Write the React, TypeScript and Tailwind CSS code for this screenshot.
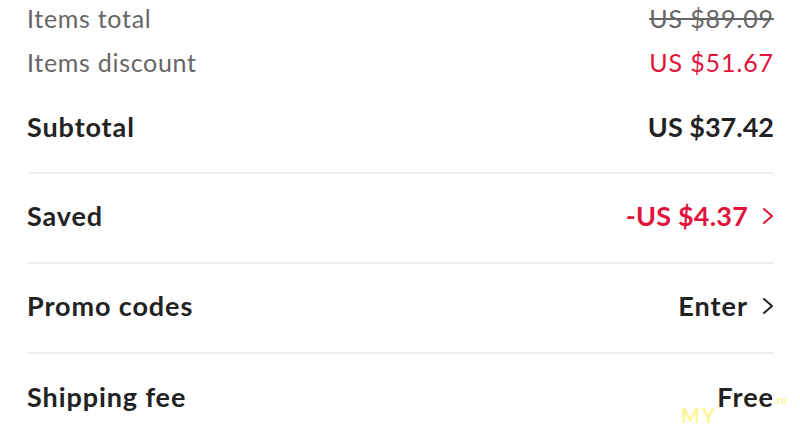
import React from "react";

function Chevron({ color }: { color: string }) {
  return (
    <svg width="12" height="18" viewBox="0 0 12 18" fill="none" className="shrink-0">
      <path d="M2 2 L10 9 L2 16" stroke={color} strokeWidth="2" strokeLinecap="round" strokeLinejoin="round" />
    </svg>
  );
}

export default function App() {
  return (
    <div
      className="relative w-[800px] h-[430px] overflow-hidden bg-white pl-[27px] pr-[26px]"
      style={{ fontFamily: "Lato, 'Noto Sans', sans-serif" }}
    >
      <div className="flex h-[38px] items-center justify-between text-[25px] text-[#666666]">
        <span className="tracking-[0.7px]">Items total</span>
        <span className="line-through tracking-[0.9px]">US $89.09</span>
      </div>
      <div className="flex h-[50px] items-center justify-between text-[25px]">
        <span className="tracking-[0.7px] text-[#666666]">Items discount</span>
        <span className="tracking-[0.9px] text-[#e0143c]">US $51.67</span>
      </div>
      <div className="flex h-[84px] items-center justify-between pb-[6px] text-[27px] font-bold text-[#222222]">
        <span className="tracking-[0.9px]">Subtotal</span>
        <span>US $37.42</span>
      </div>
      <div className="h-[2px] bg-[#f0f0f0]" />
      <div className="flex h-[88px] items-center justify-between pb-[4px] text-[27px] font-bold">
        <span className="tracking-[0.9px] text-[#222222]">Saved</span>
        <span className="flex items-center gap-[14px] tracking-[0.2px] text-[#e0143c]">
          -US $4.37
          <Chevron color="#e0143c" />
        </span>
      </div>
      <div className="h-[2px] bg-[#f0f0f0]" />
      <div className="flex h-[88px] items-center justify-between pb-[4px] text-[27px] font-bold text-[#222222]">
        <span className="tracking-[0.9px]">Promo codes</span>
        <span className="flex items-center gap-[14px] tracking-[1px]">
          Enter
          <Chevron color="#222222" />
        </span>
      </div>
      <div className="h-[2px] bg-[#f0f0f0]" />
      <div className="flex h-[90px] items-center justify-between pb-[4px] text-[27px] font-bold text-[#222222]">
        <span className="tracking-[0.9px]">Shipping fee</span>
        <span className="tracking-[1px]">Free</span>
      </div>
      <span className="absolute left-[681px] top-[400px] text-[20px] font-bold tracking-[2px] text-[#fff27a] opacity-80">
        MY
      </span>
      <span className="absolute left-[774px] top-[392px] text-[11px] font-bold text-[#fff27a] opacity-80">
        .ru
      </span>
    </div>
  );
}
